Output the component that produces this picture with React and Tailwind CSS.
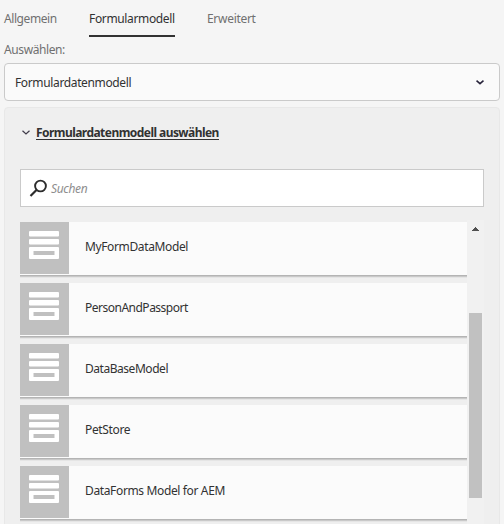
const models = [
  { name: 'MyFormDataModel', tracking: 'tracking-[-0.37px]' },
  { name: 'PersonAndPassport', tracking: 'tracking-[-0.5px]' },
  { name: 'DataBaseModel', tracking: 'tracking-[-0.46px]' },
  { name: 'PetStore', tracking: 'tracking-[-0.35px]' },
  { name: 'DataForms Model for AEM', tracking: 'tracking-[-0.36px]' },
];

function FormIcon() {
  return (
    <svg width="30" height="28" viewBox="0 0 30 28" fill="#fff">
      <rect width="30" height="5.5" rx="1" />
      <rect y="8" width="30" height="5.5" rx="1" />
      <path fillRule="evenodd" d="M1 16h28a1 1 0 0 1 1 1v10a1 1 0 0 1-1 1H1a1 1 0 0 1-1-1V17a1 1 0 0 1 1-1zM4.5 20v4h21v-4z" />
    </svg>
  );
}

function ModelRow({ name, tracking }) {
  return (
    <li className="flex h-[53px] shrink-0 bg-[#fbfbfb] shadow-[0_1px_0_#b4b4b4,0_2px_0_#c9c9c9,0_3px_0_#e5e5e5]">
      <div className="h-[52px] w-[49px] bg-[#c0c0c0] pt-[9px] pl-[9px]">
        <FormIcon />
      </div>
      <span className={`ml-4 mt-4 leading-[18px] whitespace-nowrap ${tracking}`}>{name}</span>
    </li>
  );
}

export default function App() {
  return (
    <div className="flex h-[524px] w-[504px] flex-col overflow-hidden bg-[#f5f5f5] px-1 font-['Noto_Sans',sans-serif] text-[12px] text-[#323232]">
      <nav className="flex h-[38px] shrink-0 gap-8 pt-[10px] leading-[18px] text-[#707070]">
        <a className="w-[53px] whitespace-nowrap tracking-[-0.42px]">Allgemein</a>
        <a className="h-[27px] w-[86px] whitespace-nowrap border-b-2 border-[#323232] tracking-[-0.35px] text-[#323232]">Formularmodell</a>
        <a className="whitespace-nowrap tracking-[-0.3px]">Erweitert</a>
      </nav>
      <label className="mt-[3px] h-[22px] shrink-0 leading-[18px] tracking-[-0.4px] text-[#707070]">Auswählen:</label>
      <div className="flex h-[38px] shrink-0 items-center justify-between rounded border border-[#cacaca] bg-[#fafafa] pl-[10px] pr-[15px]">
        <span className="pt-[2px] tracking-[-0.36px]">Formulardatenmodell</span>
        <svg width="8" height="5" viewBox="0 0 8 5" fill="none" stroke="#27233a" strokeWidth="1.6">
          <path d="M.5.7 4 3.7 7.5.7" />
        </svg>
      </div>
      <section className="mt-[6px] flex h-[430px] shrink-0 flex-col rounded border border-[#e8e8e8] bg-[#efefef] px-[15px]">
        <h2 className="mt-[15px] flex h-[18px] shrink-0 items-center font-bold leading-[18px]">
          <svg className="ml-[2px] mr-[6px]" width="8" height="5" viewBox="0 0 8 5" fill="none" stroke="#3f3b49" strokeWidth="1.2">
            <path d="M.5.7 4 4 7.5.7" />
          </svg>
          <span className="h-[15px] w-[183px] whitespace-nowrap border-b border-[#323232] leading-[15px] tracking-[-0.55px]">Formulardatenmodell auswählen</span>
        </h2>
        <div className="mt-[28px] flex h-[38px] shrink-0 items-center border border-[#cacaca] bg-white pl-[8px]">
          <svg width="18" height="18" viewBox="0 0 18 18" fill="none" stroke="#2c2c2c">
            <circle cx="11.5" cy="7" r="5.4" strokeWidth="1.9" />
            <path d="M7.7 10.8 1.5 17" strokeWidth="2.2" />
          </svg>
          <span className="ml-[4px] pt-[2px] italic tracking-[-0.35px] text-[#8e8e8e]">Suchen</span>
        </div>
        <div className="mt-[13px] flex h-[304px] shrink-0">
          <ul className="flex w-[447px] flex-col gap-2 pt-[2px]">
            {models.map((m) => <ModelRow key={m.name} {...m} />)}
          </ul>
          <div className="flex w-[17px] flex-col items-center bg-[#f1f1f1] pt-[7px]">
            <svg width="7" height="4" viewBox="0 0 7 4" fill="#505050" shapeRendering="crispEdges">
              <path d="M3 0h1v1h1v1h1v1h1v1H0V3h1V2h1V1h1z" />
            </svg>
            <div className="mt-[82px] h-[185px] w-[13px] bg-[#c1c1c1]" />
          </div>
        </div>
      </section>
    </div>
  );
}
